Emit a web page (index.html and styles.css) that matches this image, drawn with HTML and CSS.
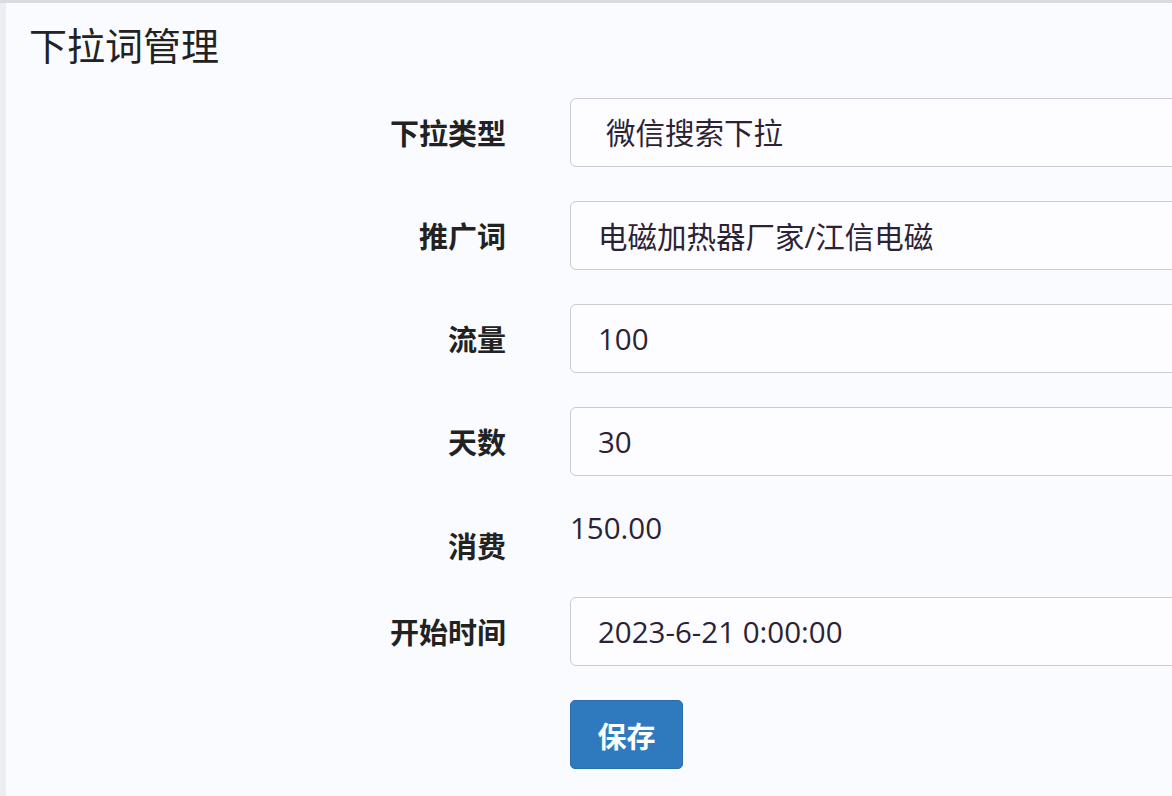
FILE: index.html
```html
<!DOCTYPE html>
<html lang="zh-CN">

<head>
    <meta charset="UTF-8">
    <meta name="viewport" content="width=device-width, initial-scale=1.0">
    <title>下拉词管理</title>
    <link rel="stylesheet" href="styles.css">
</head>

<body>

    <div class="panel">
        <h2 class="panel-title">下拉词管理</h2>

        <!-- Edit Form -->
        <form class="edit-form" onsubmit="return false">
            <div class="form-row">
                <label class="form-label" for="dropType">下拉类型</label>
                <div class="form-col">
                    <select id="dropType" class="form-control form-select">
                        <option>微信搜索下拉</option>
                    </select>
                </div>
            </div>
            <div class="form-row">
                <label class="form-label" for="keyword">推广词</label>
                <div class="form-col">
                    <input type="text" id="keyword" class="form-control" value="电磁加热器厂家/江信电磁">
                </div>
            </div>
            <div class="form-row">
                <label class="form-label" for="traffic">流量</label>
                <div class="form-col">
                    <input type="text" id="traffic" class="form-control" value="100">
                </div>
            </div>
            <div class="form-row">
                <label class="form-label" for="days">天数</label>
                <div class="form-col">
                    <input type="text" id="days" class="form-control" value="30">
                </div>
            </div>
            <div class="form-row static-row">
                <label class="form-label">消费</label>
                <div class="form-col">
                    <p class="form-static">150.00</p>
                </div>
            </div>
            <div class="form-row">
                <label class="form-label" for="startTime">开始时间</label>
                <div class="form-col">
                    <input type="text" id="startTime" class="form-control" value="2023-6-21 0:00:00">
                </div>
            </div>
            <div class="form-row">
                <div class="form-label"></div>
                <div class="form-col">
                    <button type="submit" class="btn-save">保存</button>
                </div>
            </div>
        </form>
    </div>

</body>

</html>
```

FILE: styles.css
```css
body {
    font-family: "Open Sans", "Noto Sans CJK SC", sans-serif;
    background-color: #fafbfe;
    color: #2b2335;
    margin: 0;
    padding: 0;
    border-top: 3px solid #d9dbe0;
    overflow: hidden;
}

.panel {
    border-left: 6px solid #eceef3;
    height: 793px;
    overflow: hidden;
}

.panel-title {
    margin: 0;
    padding: 15px 0 0 23px;
    font-family: "Noto Sans CJK SC", sans-serif;
    font-size: 38px;
    font-weight: normal;
    line-height: 52px;
    color: #222;
}

.edit-form {
    margin-top: 28px;
}

.form-row {
    display: flex;
    align-items: flex-start;
    margin-bottom: 34px;
}

.form-label {
    width: 500px;
    flex-shrink: 0;
    text-align: right;
    font-family: "Noto Sans CJK SC", sans-serif;
    font-size: 29px;
    font-weight: bold;
    line-height: 69px;
    color: #222;
}

.form-col {
    margin-left: 64px;
    width: 640px;
    flex-shrink: 0;
}

.form-control {
    display: block;
    box-sizing: border-box;
    width: 100%;
    height: 69px;
    padding: 0 27px;
    border: 1px solid #c9ccd3;
    border-radius: 6px;
    background-color: #fdfdff;
    font-family: "Open Sans", "Noto Sans CJK SC", sans-serif;
    font-size: 29.5px;
    color: #2b2335;
}

.form-select {
    appearance: none;
    -webkit-appearance: none;
    padding-left: 35px;
}

.static-row .form-label {
    line-height: 36px;
    padding-top: 17px;
}

.form-static {
    margin: 0;
    font-size: 29.5px;
    line-height: 36px;
}

.btn-save {
    width: 113px;
    height: 69px;
    background-color: #2f7abf;
    color: white;
    border: 1px solid #2a6dab;
    border-radius: 5px;
    font-family: "Noto Sans CJK SC", sans-serif;
    font-size: 29px;
    font-weight: bold;
    cursor: pointer;
}

.btn-save:hover {
    background-color: #286aa7;
}
```
